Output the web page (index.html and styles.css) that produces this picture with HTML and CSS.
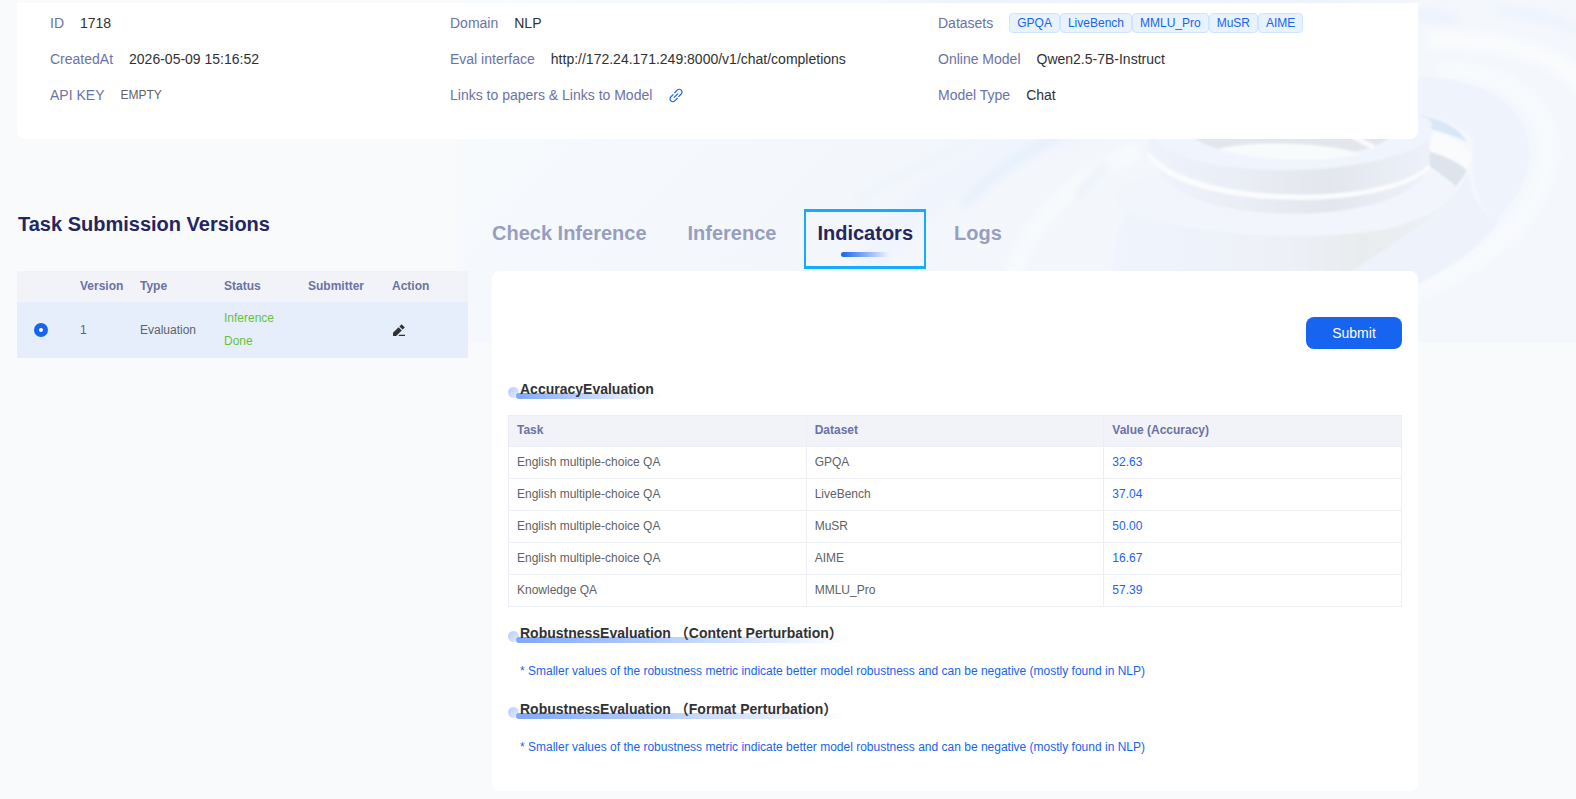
FILE: index.html
```
<!DOCTYPE html>
<html lang="en">
<head>
  <meta charset="UTF-8">
  <meta name="viewport" content="width=device-width, initial-scale=1.0">
  <title>Task Detail</title>
  <link rel="stylesheet" href="styles.css">
</head>
<body>
  <!-- Background artwork -->
  <svg class="backdrop" viewBox="0 0 1118 343" preserveAspectRatio="xMaxYMin slice" aria-hidden="true">
    <defs>
      <linearGradient id="sky" x1="0" y1="0" x2="1" y2="0.3">
        <stop offset="0" stop-color="#f7fafd"/>
        <stop offset="0.5" stop-color="#f3f7fc"/>
        <stop offset="1" stop-color="#f4f8fd"/>
      </linearGradient>
      <linearGradient id="metal" x1="0" y1="0" x2="1" y2="0">
        <stop offset="0" stop-color="#eff3fc"/>
        <stop offset="0.35" stop-color="#e9edf4"/>
        <stop offset="0.65" stop-color="#e3e7ed"/>
        <stop offset="1" stop-color="#edf1f9"/>
      </linearGradient>
      <linearGradient id="body" x1="0" y1="0" x2="1" y2="0">
        <stop offset="0" stop-color="#f0f4fd"/>
        <stop offset="0.5" stop-color="#edf1f7"/>
        <stop offset="0.72" stop-color="#e8ecef"/>
        <stop offset="1" stop-color="#eef2f9"/>
      </linearGradient>
      <filter id="soft"><feGaussianBlur stdDeviation="4"/></filter>
      <filter id="fine"><feGaussianBlur stdDeviation="1"/></filter>
    </defs>
    <rect width="1118" height="343" fill="url(#sky)"/>
    <!-- Outer ribbons -->
    <g fill="none" filter="url(#soft)">
      <path d="M400 290C450 190 540 140 700 110" stroke="#f0f4fd" stroke-width="30"/>
      <path d="M505 205C530 180 560 155 610 130" stroke="#e6effb" stroke-width="9"/>
      <path d="M400 200C450 170 490 150 560 120" stroke="#eef4fc" stroke-width="8"/>
      <path d="M550 340C545 250 590 190 680 150" stroke="#f8fafd" stroke-width="14"/>
      <path d="M620 195C632 180 640 172 650 166" stroke="#dfeaf8" stroke-width="4"/>
      <path d="M380 20C560 -10 800 -10 1000 20" stroke="#ebf2fb" stroke-width="10"/>
      <path d="M970 40C1060 38 1110 60 1130 90" stroke="#f9fbfd" stroke-width="18"/>
      <path d="M980 72C1060 66 1110 120 1085 180C1070 230 1010 270 940 300" stroke="#f8fafd" stroke-width="16"/>
      <path d="M1040 10C1080 14 1110 24 1130 34" stroke="#eaf2fb" stroke-width="8"/>
    </g>
    <path d="M950 76C1020 76 1068 100 1072 150C1072 186 1050 208 1036 222C1016 200 1012 170 1016 140C1000 122 980 116 950 114Z" fill="#eff4fc" filter="url(#fine)"/>
    <path d="M950 114C975 116 1000 124 1009 142C992 134 975 128 950 126Z" fill="#d9e7f5" filter="url(#fine)"/>
    <path d="M950 128C985 130 1008 142 1014 156C1012 164 1010 168 1008 170C995 158 975 152 950 150Z" fill="#f9fbfc" filter="url(#fine)"/>
    <path d="M965 150C985 154 1000 162 1009 170C1005 178 1000 184 996 188C988 178 978 170 965 164Z" fill="#dde4eb" filter="url(#fine)"/>
    <!-- Stacked discs -->
    <g filter="url(#fine)">
      <path d="M654 343C650 270 655 210 690 180H980L1000 200C990 250 910 290 850 343Z" fill="url(#body)"/>
      <path d="M690 176C640 190 650 210 690 218C770 238 860 240 930 229C980 214 1004 200 996 184L970 165Z" fill="#f2f6fc"/>
      <path d="M704 176C740 226 930 226 966 176V166H700Z" fill="url(#metal)"/>
      <path d="M690 150C730 206 930 208 972 163V168C934 212 724 212 690 156Z" fill="#fafcfd"/>
      <path d="M690 150C730 202 930 202 972 163V130H690Z" fill="url(#metal)"/>
      <path d="M692 126C700 186 930 180 974 137V124C970 96 700 96 692 126Z" fill="#f0f4fc"/>
      <ellipse cx="834" cy="126" rx="105" ry="32" fill="#e3e7ec"/>
      <path d="M760 149C790 140 870 142 904 154C870 162 800 162 760 149Z" fill="#f8fbfc"/>
      <path d="M896 137L916 147" stroke="#f9fbfd" stroke-width="5"/>
    </g>
    <path d="M1010 172C984 230 890 260 800 343H850C920 300 1010 270 1040 222C1016 206 1014 190 1010 172Z" fill="#eef3fb" filter="url(#fine)"/>
  </svg>

  <main class="page">
    <!-- Task info -->
    <section class="info-card">
      <div class="info-item"><span class="info-label">ID</span><span>1718</span></div>
      <div class="info-item"><span class="info-label">Domain</span><span>NLP</span></div>
      <div class="info-item">
        <span class="info-label">Datasets</span>
        <span class="tags"><span class="tag">GPQA</span><span class="tag">LiveBench</span><span class="tag">MMLU_Pro</span><span class="tag">MuSR</span><span class="tag">AIME</span></span>
      </div>
      <div class="info-item"><span class="info-label">CreatedAt</span><span>2026-05-09 15:16:52</span></div>
      <div class="info-item"><span class="info-label">Eval interface</span><span>http://172.24.171.249:8000/v1/chat/completions</span></div>
      <div class="info-item"><span class="info-label">Online Model</span><span>Qwen2.5-7B-Instruct</span></div>
      <div class="info-item"><span class="info-label">API KEY</span><span class="api-key">EMPTY</span></div>
      <div class="info-item">
        <span class="info-label">Links to papers &amp; Links to Model</span>
        <a class="paper-link" href="#" aria-label="Open links">
          <svg viewBox="0 0 16 16" width="16" height="16" fill="none" stroke="#1764f0" stroke-width="1.2">
            <path d="M6.4 6 9.2 3.2a2.6 2.6 0 0 1 4 0 2.6 2.6 0 0 1 0 3.8L10.4 9.8"/>
            <path d="M9.6 11 6.8 13.8a2.6 2.6 0 0 1-4 0 2.6 2.6 0 0 1 0-3.8L5.4 7.4"/>
            <path d="M6 10.6 10 6.6"/>
          </svg>
        </a>
      </div>
      <div class="info-item"><span class="info-label">Model Type</span><span>Chat</span></div>
    </section>

    <div class="columns">
      <!-- Versions -->
      <section class="versions">
        <h2>Task Submission Versions</h2>
        <table class="version-table">
          <colgroup>
            <col class="col-radio"><col class="col-version"><col class="col-type"><col class="col-status"><col class="col-submitter"><col>
          </colgroup>
          <thead>
            <tr><th></th><th>Version</th><th>Type</th><th>Status</th><th>Submitter</th><th>Action</th></tr>
          </thead>
          <tbody>
            <tr>
              <td><input type="radio" name="version" aria-label="Version 1" checked></td>
              <td>1</td>
              <td>Evaluation</td>
              <td class="status">Inference Done</td>
              <td></td>
              <td>
                <button class="edit-btn" type="button" aria-label="Edit">
                  <svg viewBox="0 0 14 14" width="14" height="14" fill="#303133">
                    <path d="M1 13V9.8L6.6 4.2 9.8 7.4 4.2 13Z"/>
                    <path d="M7.4 3.4 9.6 1.2 12.8 4.4 10.6 6.6Z"/>
                    <path d="M7.4 11.8H13V13H6.4Z"/>
                  </svg>
                </button>
              </td>
            </tr>
          </tbody>
        </table>
      </section>

      <!-- Results -->
      <section class="results">
        <nav class="tabs">
          <a href="#">Check Inference</a>
          <a href="#">Inference</a>
          <a href="#" class="active">Indicators</a>
          <a href="#">Logs</a>
        </nav>

        <div class="panel">
          <div class="panel-actions">
            <button class="submit-btn" type="button">Submit</button>
          </div>

          <h3 class="section-title">AccuracyEvaluation</h3>
          <table class="result-table">
            <thead>
              <tr><th>Task</th><th>Dataset</th><th>Value (Accuracy)</th></tr>
            </thead>
            <tbody>
              <tr><td>English multiple-choice QA</td><td>GPQA</td><td>32.63</td></tr>
              <tr><td>English multiple-choice QA</td><td>LiveBench</td><td>37.04</td></tr>
              <tr><td>English multiple-choice QA</td><td>MuSR</td><td>50.00</td></tr>
              <tr><td>English multiple-choice QA</td><td>AIME</td><td>16.67</td></tr>
              <tr><td>Knowledge QA</td><td>MMLU_Pro</td><td>57.39</td></tr>
            </tbody>
          </table>

          <h3 class="section-title">RobustnessEvaluation （Content Perturbation）</h3>
          <p class="note">* Smaller values of the robustness metric indicate better model robustness and can be negative (mostly found in NLP)</p>

          <h3 class="section-title">RobustnessEvaluation （Format Perturbation）</h3>
          <p class="note">* Smaller values of the robustness metric indicate better model robustness and can be negative (mostly found in NLP)</p>
        </div>
      </section>
    </div>
  </main>
</body>
</html>
```
FILE: styles.css
```
* {
  box-sizing: border-box;
}

body {
  margin: 0;
  position: relative;
  background-color: #f9fafc;
  color: #303133;
  font-family: "Liberation Sans", Arial, "Noto Sans CJK SC", sans-serif;
  font-size: 14px;
}

/* Background artwork */
.backdrop {
  position: absolute;
  top: 0;
  right: 0;
  width: 71%;
  height: 343px;
}

.page {
  position: relative;
  margin: 0 158px 0 17px;
  padding: 3px 0 8px;
}

/* Task info */
.info-card {
  display: grid;
  grid-template-columns: 400fr 488fr 447fr;
  grid-auto-rows: 36px;
  height: 136px;
  padding: 2px 33px 0;
  background-color: #fff;
  border-radius: 0 0 8px 8px;
}

.info-item {
  display: flex;
  align-items: center;
  gap: 16px;
  white-space: nowrap;
}

.info-label {
  color: #6b72a5;
}

.api-key {
  font-size: 12px;
  color: #606266;
}

.tags {
  display: flex;
}

.tag {
  height: 20px;
  padding: 0 7px;
  border: 1px solid #d1e5ff;
  border-radius: 4px;
  background-color: #e9f2ff;
  color: #1764f0;
  font-size: 12px;
  line-height: 18px;
}

.paper-link {
  display: flex;
}

.columns {
  display: grid;
  grid-template-columns: 451fr 926fr;
  column-gap: 24px;
  margin-top: 70px;
}

/* Versions */
.versions h2 {
  height: 62px;
  margin: 0;
  padding-left: 1px;
  color: #25265e;
  font-size: 20px;
  line-height: 30px;
}

.version-table {
  width: 100%;
  border-collapse: collapse;
  table-layout: fixed;
  color: #606266;
  font-size: 12px;
  line-height: 23px;
}

.col-radio { width: 55px; }
.col-version { width: 60px; }
.col-type { width: 84px; }
.col-status { width: 84px; }
.col-submitter { width: 84px; }

.version-table th {
  height: 31px;
  padding: 0 8px;
  background-color: #f2f3f8;
  color: #6b72a5;
  text-align: left;
}

.version-table td {
  height: 56px;
  padding: 0 8px;
  background-color: #e6eefc;
}

.version-table .status {
  color: #67c23a;
}

.version-table input {
  appearance: none;
  display: block;
  width: 14px;
  height: 14px;
  margin: 0 9px;
  border: 5px solid #1764f0;
  border-radius: 50%;
  background-color: #fff;
}

.edit-btn {
  display: block;
  padding: 0;
  border: 0;
  background: none;
}

.edit-btn svg {
  display: block;
}

/* Tabs */
.tabs {
  display: flex;
  gap: 15px;
  height: 62px;
}

.tabs a {
  position: relative;
  height: 60px;
  padding: 0 11px;
  border: solid transparent;
  border-width: 3px 2px;
  color: #989ebf;
  font-size: 20px;
  font-weight: bold;
  line-height: 42px;
  text-decoration: none;
}

.tabs a:first-child {
  padding-left: 0;
  border-left: 0;
}

.tabs .active {
  border-color: #14acff;
  color: #25265e;
}

.tabs .active::after {
  content: "";
  position: absolute;
  left: 50%;
  bottom: 9px;
  width: 48px;
  height: 5px;
  margin-left: -24px;
  border-radius: 3px;
  background: linear-gradient(90deg, #1764f0, rgba(23, 100, 240, 0));
}

/* Results panel */
.panel {
  min-height: 520px;
  padding: 46px 16px 18px;
  background-color: #fff;
  border-radius: 8px;
}

.panel-actions {
  display: flex;
  justify-content: flex-end;
  margin-bottom: 28px;
}

.submit-btn {
  width: 96px;
  height: 32px;
  border: 0;
  border-radius: 8px;
  background-color: #1764f0;
  color: #fff;
  font-family: inherit;
  font-size: 14px;
}

.section-title {
  position: relative;
  width: fit-content;
  margin: 0 0 14px;
  padding: 0 8px 0 12px;
  font-size: 14px;
  line-height: 24px;
  z-index: 0;
}

.section-title::before {
  content: "";
  position: absolute;
  left: 0;
  bottom: 3px;
  width: 11px;
  height: 11px;
  border-radius: 50%;
  background: linear-gradient(135deg, #b4cbf9, #e6eefd);
  z-index: -1;
}

.section-title::after {
  content: "";
  position: absolute;
  left: 8px;
  right: 0;
  bottom: 2px;
  height: 6px;
  border-radius: 3px;
  background: linear-gradient(90deg, #80a8f8, rgba(200, 218, 252, 0));
  z-index: -1;
}

.result-table {
  width: 100%;
  margin-bottom: 14px;
  border-collapse: collapse;
  table-layout: fixed;
  color: #606266;
  font-size: 12px;
}

.result-table th,
.result-table td {
  height: 32px;
  padding: 0 8px 2px;
  border: 1px solid #ebeef5;
  text-align: left;
}

.result-table th {
  height: 31px;
  background-color: #f2f3f8;
  color: #6b72a5;
}

.result-table td:last-child {
  color: #1764f0;
}

.note {
  margin: 0 0 14px;
  padding-left: 12px;
  color: #1764f0;
  font-size: 12px;
  line-height: 24px;
}
```
